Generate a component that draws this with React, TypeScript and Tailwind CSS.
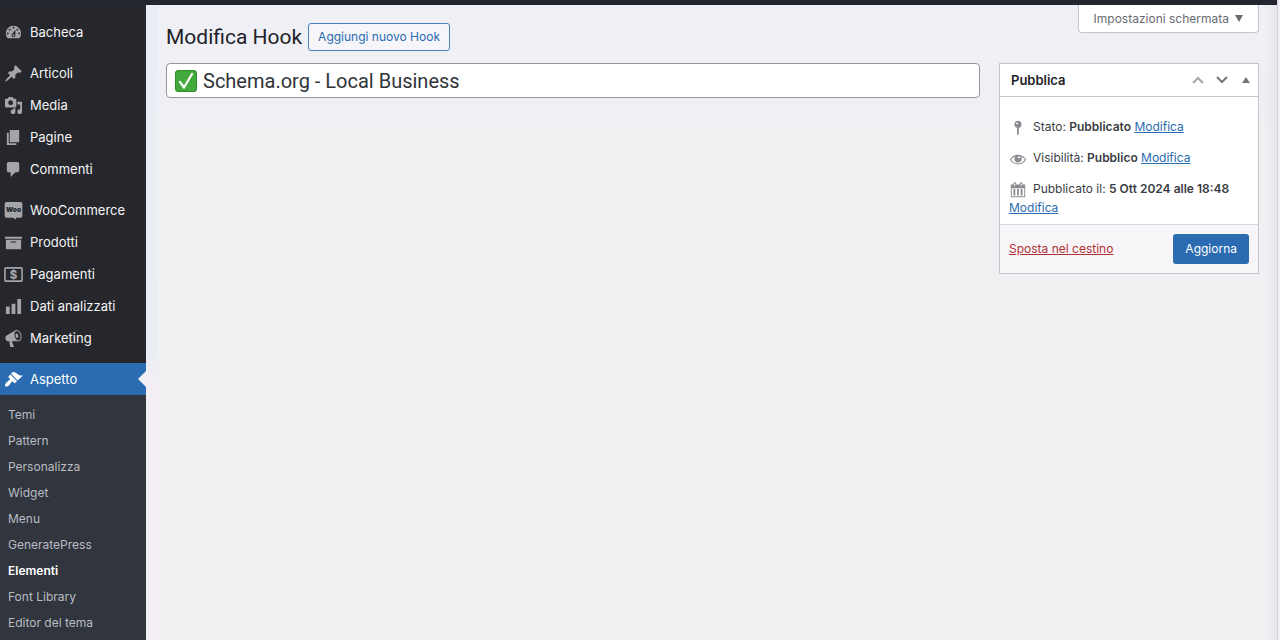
import { useState, type ReactNode } from 'react'
import { clsx } from 'clsx'

const icons: Record<string, ReactNode> = {
  dashboard: (
    <path d="M3.76 16h12.48c1.1-1.37 1.76-3.11 1.76-5 0-4.42-3.58-8-8-8s-8 3.58-8 8c0 1.89.66 3.63 1.76 5zM10 4c.55 0 1 .45 1 1s-.45 1-1 1-1-.45-1-1 .45-1 1-1zM6 6c.55 0 1 .45 1 1s-.45 1-1 1-1-.45-1-1 .45-1 1-1zm8 0c.55 0 1 .45 1 1s-.45 1-1 1-1-.45-1-1 .45-1 1-1zm-5.37 5.55L12 7v6c0 1.1-.9 2-2 2s-2-.9-2-2c0-.57.24-1.08.63-1.45zM4 10c.55 0 1 .45 1 1s-.45 1-1 1-1-.45-1-1 .45-1 1-1zm12 0c.55 0 1 .45 1 1s-.45 1-1 1-1-.45-1-1 .45-1 1-1zm-5 3c0-.55-.45-1-1-1s-1 .45-1 1 .45 1 1 1 1-.45 1-1z" />
  ),
  post: (
    <path d="M10.44 3.02l1.82-1.82 6.36 6.35-1.83 1.82c-1.05-.68-2.48-.57-3.41.36l-.75.75c-.92.93-1.04 2.35-.35 3.41l-1.83 1.82-2.41-2.41-2.8 2.79c-.42.42-3.38 2.71-3.8 2.29s1.86-3.39 2.28-3.81l2.79-2.79L4.1 9.36l1.83-1.82c1.05.69 2.48.57 3.4-.36l.75-.75c.93-.92 1.05-2.35.36-3.41z" />
  ),
  media: (
    <path d="M13 11V4c0-.55-.45-1-1-1h-1.67L9 1H5L3.67 3H2c-.55 0-1 .45-1 1v7c0 .55.45 1 1 1h10c.55 0 1-.45 1-1zM7 4.5c1.38 0 2.5 1.12 2.5 2.5S8.38 9.5 7 9.5 4.5 8.38 4.5 7 5.62 4.5 7 4.5zM14 6h5v10.5c0 1.38-1.12 2.5-2.5 2.5S14 17.88 14 16.5s1.12-2.5 2.5-2.5c.17 0 .34.02.5.05V9h-3V6zm-4 8.05V13h2v3.5c0 1.38-1.12 2.5-2.5 2.5S7 17.88 7 16.5 8.12 14 9.5 14c.17 0 .34.02.5.05z" />
  ),
  page: <path d="M6 15V2h10v13H6zm-1 1h8v2H3V5h2v11z" />,
  comments: (
    <path d="M5 2h9c1.1 0 2 .9 2 2v7c0 1.1-.9 2-2 2h-2l-5 5v-5H5c-1.1 0-2-.9-2-2V4c0-1.1.9-2 2-2z" />
  ),
  woo: (
    <>
      <path d="M2.5 1h15a1.8 1.8 0 0 1 1.8 1.8v13a1.8 1.8 0 0 1-1.8 1.8h-5.3l.8 2.2-3.8-2.2H2.5a1.8 1.8 0 0 1-1.8-1.8v-13A1.8 1.8 0 0 1 2.5 1z" />
      <text
        x="10"
        y="12"
        textAnchor="middle"
        fontSize="7"
        fontWeight="900"
        fontFamily="Inter, sans-serif"
        className="fill-[#25282e]"
      >
        Woo
      </text>
    </>
  ),
  archive: <path d="M19 4v2H1V4h18zM2 7h16v10H2V7zm11 3V9H7v1h6z" />,
  payments: (
    <>
      <rect x="1" y="3" width="18" height="14" rx="1" fill="none" stroke="currentColor" strokeWidth="1.7" />
      <text x="10" y="14.4" textAnchor="middle" fontSize="12" fontWeight="800" fontFamily="Inter, sans-serif">
        $
      </text>
    </>
  ),
  chart: <path d="M18 18V2h-4v16h4zm-6 0V7H8v11h4zm-6 0v-8H2v8h4z" />,
  megaphone: (
    <path
      fillRule="evenodd"
      d="M18.15 5.94c.46 1.62.38 3.22-.02 4.48-.42 1.28-1.26 2.18-2.3 2.48-.16.06-.26.06-.4.06-.06.02-.12.02-.18.02-.06.02-.14.02-.22.02h-6.8l2.22 5.5c.02.14-.06.26-.14.34-.08.1-.24.16-.34.16H6.95c-.1 0-.26-.06-.34-.16-.08-.08-.16-.2-.14-.34l-1-5.5H4.25l-.02-.02c-.5.06-1.08-.18-1.54-.62s-.88-1.08-1.06-1.88c-.24-.8-.2-1.56-.02-2.2.18-.62.58-1.08 1.06-1.3l.02-.02 9-5.4c.1-.06.18-.1.24-.16.06-.04.14-.08.24-.12.16-.08.28-.12.5-.18 1.04-.3 2.24.1 3.22.98s1.84 2.24 2.26 3.86zm-2.58 5.98c.4-.1.74-.34 1.04-.7.58-.7.86-1.76.86-3.04 0-.64-.1-1.3-.28-1.98-.34-1.36-1.02-2.5-1.78-3.24s-1.68-1.1-2.46-.88c-.82.22-1.4.96-1.7 2-.32 1.04-.28 2.36.06 3.72.38 1.36 1 2.5 1.8 3.24.78.74 1.62 1.1 2.48.88zm-2.54-7.08c.22-.04.42-.02.62.04.38.16.76.48 1.02 1s.42 1.2.42 1.78c0 .3-.04.56-.12.8-.18.48-.44.84-.86.94-.34.1-.8-.06-1.14-.4s-.64-.86-.78-1.5c-.18-.62-.12-1.24.02-1.72s.48-.84.82-.94z"
    />
  ),
  appearance: (
    <path d="M14.48 11.06L7.41 3.99l1.5-1.5c.5-.56 2.3-.47 3.51.32 1.21.8 1.43 1.28 2.91 2.1 1.18.64 2.45 1.26 4.45.85zm-.71.71L6.7 4.7 4.93 6.47c-.39.39-.39 1.02 0 1.41l1.06 1.06c.39.39.39 1.03 0 1.42-.6.6-1.43 1.11-2.21 1.69-.35.26-.7.53-1.01.84C1.43 14.23.4 16.08 1.4 17.07c.99 1 2.84-.03 4.18-1.36.31-.31.58-.66.85-1.02.57-.78 1.08-1.61 1.69-2.21.39-.39 1.02-.39 1.41 0l1.06 1.06c.39.39 1.02.39 1.41 0z" />
  ),
  pin: (
    <path d="M14 6c0 1.86-1.28 3.41-3 3.86V16c0 1-2 2-2 2V9.86c-1.72-.45-3-2-3-3.86 0-2.21 1.79-4 4-4s4 1.79 4 4zM8 5c0 .55.45 1 1 1s1-.45 1-1-.45-1-1-1-1 .45-1 1z" />
  ),
  visibility: (
    <path d="M18.3 9.5C15 4.9 8.5 3.8 3.9 7.2c-1.2.9-2.2 2.1-3 3.4.2.4.5.8.8 1.2 3.3 4.6 9.6 5.6 14.2 2.4.9-.7 1.7-1.4 2.4-2.4.3-.4.5-.8.8-1.2-.3-.4-.5-.8-.8-1.1zm-8.2-2.3c.5-.5 1.3-.5 1.8 0s.5 1.3 0 1.8-1.3.5-1.8 0-.5-1.3 0-1.8zm-.1 7.7c-3.1 0-6-1.6-7.7-4.2C3.5 9 5.1 7.8 7 7.2c-.7.8-1 1.7-1 2.7 0 2.2 1.7 4.1 4 4.1 2.2 0 4.1-1.7 4.1-4v-.1c0-1-.4-2-1.1-2.7 1.9.6 3.5 1.8 4.7 3.5-1.7 2.6-4.6 4.2-7.7 4.2z" />
  ),
  calendar: (
    <path
      fillRule="evenodd"
      d="M15 4h3v14H2V4h3V3c0-.83.67-1.5 1.5-1.5S8 2.17 8 3v1h4V3c0-.83.67-1.5 1.5-1.5S15 2.17 15 3v1zM6 3v2.5c0 .28.22.5.5.5s.5-.22.5-.5V3c0-.28-.22-.5-.5-.5S6 2.72 6 3zm7 0v2.5c0 .28.22.5.5.5s.5-.22.5-.5V3c0-.28-.22-.5-.5-.5s-.5.22-.5.5zm4 14V8H3v9h14zM7 16V9H5v7h2zm4 0V9H9v7h2zm4 0V9h-2v7h2z"
    />
  ),
}

function Icon({ name, className }: { name: string; className?: string }) {
  return (
    <svg viewBox="0 0 20 20" fill="currentColor" aria-hidden="true" className={clsx('shrink-0', className)}>
      {icons[name]}
    </svg>
  )
}

const menuGroups = [
  [{ label: 'Bacheca', icon: 'dashboard' }],
  [
    { label: 'Articoli', icon: 'post' },
    { label: 'Media', icon: 'media' },
    { label: 'Pagine', icon: 'page' },
    { label: 'Commenti', icon: 'comments' },
  ],
  [
    { label: 'WooCommerce', icon: 'woo' },
    { label: 'Prodotti', icon: 'archive' },
    { label: 'Pagamenti', icon: 'payments' },
    { label: 'Dati analizzati', icon: 'chart' },
    { label: 'Marketing', icon: 'megaphone' },
  ],
  [{ label: 'Aspetto', icon: 'appearance', current: true }],
]

const submenu = [
  'Temi',
  'Pattern',
  'Personalizza',
  'Widget',
  'Menu',
  'GeneratePress',
  'Elementi',
  'Font Library',
  'Editor del tema',
]

function AdminMenu() {
  return (
    <nav className="flex w-[146px] shrink-0 flex-col bg-[#25272d] pt-[11px]">
      <div className="flex flex-col gap-[9px]">
        {menuGroups.map((group, i) => (
          <ul key={i}>
            {group.map((item) => (
              <li key={item.label}>
                <a
                  href="#"
                  className={clsx(
                    'relative flex h-8 items-center gap-[7px] pl-1 text-[13px]',
                    item.current ? 'bg-[#2a6bb1] text-white' : 'text-[#f4f4f5]'
                  )}
                >
                  <Icon
                    name={item.icon}
                    className={clsx('size-[19px]', item.current ? 'text-white' : 'text-[#a3a5aa]')}
                  />
                  <span className="pt-0.5">{item.label}</span>
                  {item.current && (
                    <span className="absolute right-0 top-1/2 -translate-y-1/2 border-y-8 border-r-8 border-y-transparent border-r-[#f1eff5]" />
                  )}
                </a>
              </li>
            ))}
          </ul>
        ))}
      </div>
      <ul className="flex-1 bg-[#31353d] pb-1 pt-[7px]">
        {submenu.map((label) => (
          <li key={label}>
            <a
              href="#"
              className={clsx(
                'flex h-[26px] items-center pl-2 text-xs',
                label === 'Elementi' ? 'font-semibold text-white' : 'text-[#b9bcc2]'
              )}
            >
              {label}
            </a>
          </li>
        ))}
      </ul>
    </nav>
  )
}

function EditLink() {
  return (
    <a href="#" className="text-[#2a6bb1] underline">
      Modifica
    </a>
  )
}

function PublishRow({ icon, label, value }: { icon: string; label: string; value: string }) {
  return (
    <p className="leading-[19px]">
      <Icon name={icon} className="-my-1 mr-[6px] inline-block size-[18px] align-middle text-[#8a8b90]" />
      {label} <b className="font-semibold">{value}</b> <EditLink />
    </p>
  )
}

function PublishBox() {
  return (
    <section className="w-[260px] shrink-0 border border-[#c6c5cb] bg-white text-xs text-[#3a3d43]">
      <header className="flex h-[33px] items-center justify-between border-b border-[#c6c5cb] pl-[11px] pr-2">
        <h2 className="pt-0.5 text-[13px] font-semibold text-[#1f2228]">Pubblica</h2>
        <div className="flex items-center gap-3">
          <button aria-label="Sposta su" className="text-[#a5a6aa]">
            <svg viewBox="0 0 12 8" className="h-2 w-3" fill="none" stroke="currentColor" strokeWidth="2">
              <path d="M1 7l5-5 5 5" />
            </svg>
          </button>
          <button aria-label="Sposta giù" className="text-[#74767b]">
            <svg viewBox="0 0 12 8" className="h-2 w-3" fill="none" stroke="currentColor" strokeWidth="2">
              <path d="M1 1l5 5 5-5" />
            </svg>
          </button>
          <button aria-label="Attiva/disattiva il pannello" className="pl-0.5 text-[#74767b]">
            <svg viewBox="0 0 8 6" className="h-[6px] w-2" fill="currentColor">
              <path d="M4 0l4 6H0z" />
            </svg>
          </button>
        </div>
      </header>
      <div className="flex flex-col gap-3 px-[9px] pb-[7px] pt-5">
        <PublishRow icon="pin" label="Stato:" value="Pubblicato" />
        <PublishRow icon="visibility" label="Visibilità:" value="Pubblico" />
        <PublishRow icon="calendar" label="Pubblicato il:" value="5 Ott 2024 alle 18:48" />
      </div>
      <footer className="flex items-center justify-between border-t border-[#d9d8dd] bg-[#f7f5f8] px-[9px] py-[9px]">
        <a href="#" className="text-[#b03136] underline">
          Sposta nel cestino
        </a>
        <button className="h-[30px] rounded-[3px] bg-[#2a6bb1] px-3 text-white">Aggiorna</button>
      </footer>
    </section>
  )
}

export default function App() {
  const [title, setTitle] = useState('Schema.org - Local Business')

  return (
    <div className="flex min-h-screen bg-[#f0eff2] font-['Inter',sans-serif]">
      <div className="flex min-w-0 flex-1 flex-col">
        <div className="h-[5px] bg-[#23262f]" />
        <div className="flex flex-1">
          <AdminMenu />
          <div className="w-3 bg-linear-to-b from-[#ebedf5] from-55% to-[#f3eef4] to-60%" />
          <main className="min-w-0 flex-1 bg-linear-to-b from-[#eff0f6] to-[#f0eff2] to-20% pl-2">
            <div className="flex items-start justify-between pr-[6px]">
              <div className="flex items-center gap-[6px] pt-[18px]">
                <h1 className="font-['Roboto',sans-serif] text-[21px] leading-7 text-[#1f2228]">Modifica Hook</h1>
                <a
                  href="#"
                  className="flex h-7 items-center rounded-[3px] border border-[#4a7fbb] bg-[#f6f5f9] px-[9px] text-xs text-[#2a6bb1]"
                >
                  Aggiungi nuovo Hook
                </a>
              </div>
              <button className="flex h-7 items-center gap-[6px] rounded-b-[4px] border border-t-0 border-[#c6c5cb] bg-white px-[15px] text-xs text-[#696b70]">
                Impostazioni schermata
                <svg viewBox="0 0 8 7" className="h-[7px] w-2" fill="currentColor" aria-hidden="true">
                  <path d="M0 0h8L4 7z" />
                </svg>
              </button>
            </div>
            <div className="flex items-start gap-[19px] pr-[6px] pt-3">
              <div className="flex h-[35px] flex-1 items-center gap-[6px] rounded-[4px] border border-[#96969c] bg-white px-2">
                <svg viewBox="0 0 22 22" className="size-[22px] shrink-0" aria-hidden="true">
                  <rect width="22" height="22" rx="3.5" fill="#2f8f2c" />
                  <rect x="1" y="1" width="20" height="20" rx="3" fill="#43a93c" />
                  <path d="M5 12l4 5.5L17 4" fill="none" stroke="#fff" strokeWidth="2.2" strokeLinecap="round" strokeLinejoin="round" />
                </svg>
                <input
                  type="text"
                  aria-label="Aggiungi titolo"
                  value={title}
                  onChange={(e) => setTitle(e.target.value)}
                  className="min-w-0 flex-1 bg-transparent font-['Roboto',sans-serif] text-xl text-[#303338] outline-none"
                />
              </div>
              <PublishBox />
            </div>
          </main>
          <div className="w-3 bg-linear-to-r from-[#f0eff2] to-[#e6e6ec]" />
        </div>
      </div>
      <div className="w-[3px] border-l border-[#d0d1d9] bg-[#f0f0f5]" />
    </div>
  )
}
